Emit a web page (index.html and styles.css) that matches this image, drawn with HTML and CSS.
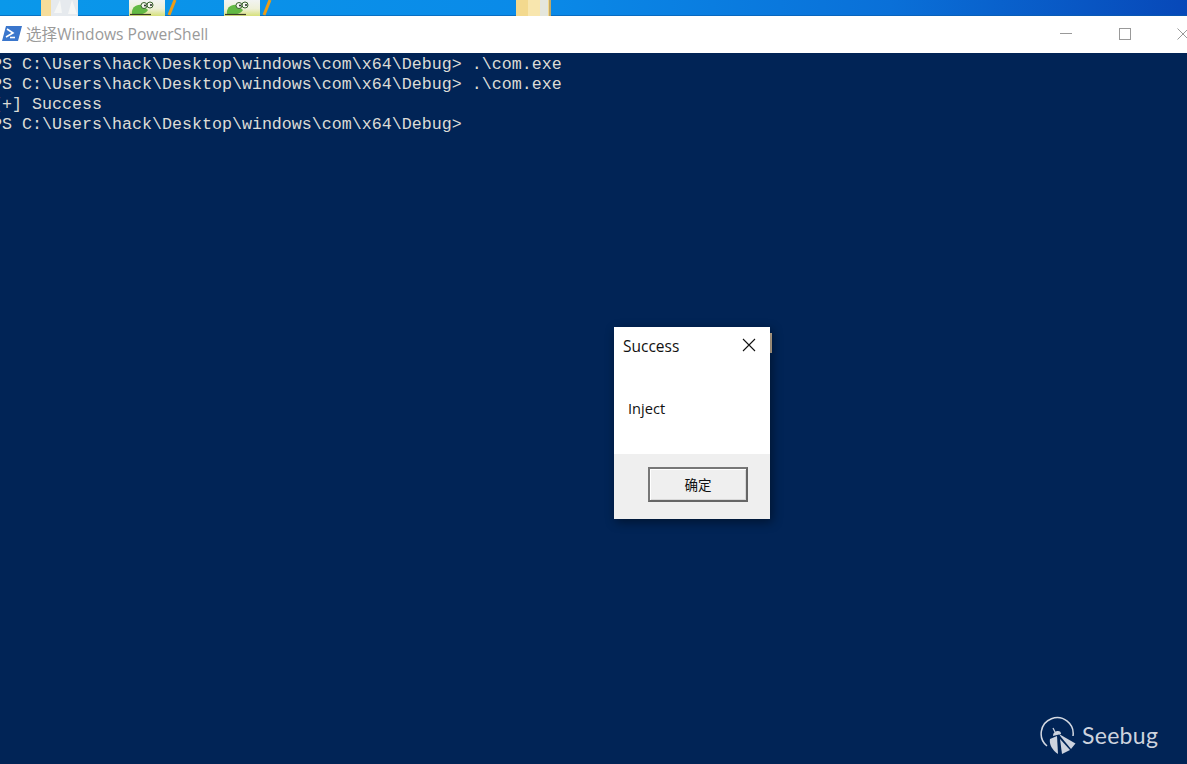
FILE: index.html
```html
<!DOCTYPE html>
<html lang="zh">
<head>
<meta charset="utf-8">
<title>Windows PowerShell</title>
<link rel="stylesheet" href="styles.css">
</head>
<body>
<div class="desktop">
  <svg class="strip" width="1187" height="16" viewBox="0 0 1187 16">
    <defs>
      <linearGradient id="sky" x1="0" x2="1" y1="0" y2="0">
        <stop offset="0" stop-color="#0a98ea"/>
        <stop offset="0.45" stop-color="#0a8ae8"/>
        <stop offset="0.75" stop-color="#0a70d8"/>
        <stop offset="1" stop-color="#0748b8"/>
      </linearGradient>
      <linearGradient id="page" x1="0" x2="0" y1="0" y2="1">
        <stop offset="0" stop-color="#f2f4f2"/>
        <stop offset=".55" stop-color="#eef0d8"/>
        <stop offset="1" stop-color="#d6e07a"/>
      </linearGradient>
      <g id="npp">
        <rect x="4" width="36" height="16" fill="url(#page)"/>
        <path d="M7 14c-1-6 4-10 10-9l6 5c-2 4-10 6-16 4z" fill="#62b944"/>
        <circle cx="19" cy="5.500" r="3" fill="#f4f7ee" stroke="#39602c"/>
        <circle cx="25" cy="5" r="3" fill="#f4f7ee" stroke="#39602c"/>
        <circle cx="20" cy="5.500" r="1" fill="#222"/>
        <circle cx="26" cy="5" r="1" fill="#222"/>
        <path d="M5 14.500h21" stroke="#3b3a24" stroke-width="1.200"/>
        <path d="M50 0l-6 15" stroke="#eb9c16" stroke-width="3"/>
      </g>
    </defs>
    <rect width="1187" height="16" fill="url(#sky)"/>
    <rect y="15" width="1187" height="1" fill="#0a5ca8" opacity=".6"/>
    <rect x="41" width="37" height="16" fill="#f6dd9a"/>
    <path d="M51 0h27v16H51z" fill="#e6eaee"/>
    <path d="M60 0l-6 13h8zM72 0l-4 14h9z" fill="#f6f7f6"/>
    <use href="#npp" x="125"/>
    <use href="#npp" x="220"/>
    <rect x="516" width="35" height="16" fill="#f3d98e"/>
    <rect x="528" width="12" height="16" fill="#f8e6ae"/>
    <rect x="540" width="8" height="16" fill="#e4e6dc"/>
    <rect x="549" width="2" height="16" fill="#c0a868"/>
  </svg>

  <div class="window">
    <header class="titlebar">
      <svg class="ps-icon" width="21" height="17" viewBox="0 0 21 17">
        <path d="M5 1h16l-4 15H1z" fill="#3a76cc"/>
        <path d="M6 4l6 4-7 4" fill="none" stroke="#fff" stroke-width="1.600"/>
        <path d="M9 12.500h5" stroke="#fff" stroke-width="1.600"/>
      </svg>
      <span class="title">选择Windows PowerShell</span>
      <div class="controls">
        <svg class="ctl ctl-min" width="12" height="12" viewBox="0 0 12 12"><path d="M0 5.500h12" stroke="#999"/></svg>
        <svg class="ctl ctl-max" width="12" height="12" viewBox="0 0 12 12"><rect x=".5" y=".5" width="11" height="11" fill="none" stroke="#999"/></svg>
        <svg class="ctl ctl-close" width="12" height="12" viewBox="0 0 12 12"><path d="M.5.5l11 11M11.500.5l-11 11" stroke="#999"/></svg>
      </div>
    </header>
    <pre class="console">PS C:\Users\hack\Desktop\windows\com\x64\Debug&gt; .\com.exe
PS C:\Users\hack\Desktop\windows\com\x64\Debug&gt; .\com.exe
[+] Success
PS C:\Users\hack\Desktop\windows\com\x64\Debug&gt;</pre>
  </div>

  <div class="sliver"></div>

  <div class="dialog">
    <div class="dialog-head">
      <span>Success</span>
      <svg class="dialog-x" width="14" height="14" viewBox="0 0 14 14"><path d="M1 1l12 12M13 1L1 13" stroke="#111" stroke-width="1.100"/></svg>
    </div>
    <div class="dialog-body">Inject</div>
    <div class="dialog-foot">
      <button class="ok" type="button">确定</button>
    </div>
  </div>

  <div class="watermark">
    <svg width="38" height="40" viewBox="0 0 38 40">
      <path d="M7 30A16 16 0 1 1 33 20" fill="none" stroke="#d4d9e2" stroke-width="1.500"/>
      <path d="M17 20L10 23C9 28 12 34 18 38z" fill="#cdd3de"/>
      <path d="M19 18L35.500 27.500L31 33L21 21z" fill="#cdd3de"/>
      <path d="M20 23L30 34L22 38z" fill="#cdd3de"/>
      <path d="M13 20c0-4 3-5 5-5s3 1 3 3z" fill="#cdd3de"/>
      <path d="M15 16l-2-4" stroke="#cdd3de" stroke-width="1.200"/>
    </svg>
    <span class="wm-text">Seebug</span>
  </div>
</div>
</body>
</html>
```

FILE: styles.css
```css
* { box-sizing: border-box; }
html, body { margin: 0; height: 100%; }
body { overflow: hidden; background: #012456; }

.desktop {
  position: relative;
  width: 1187px;
  height: 764px;
  display: flex;
  flex-direction: column;
  overflow: hidden;
}
.strip { display: block; flex: none; }

.window { flex: 1; display: flex; flex-direction: column; min-height: 0; }

.titlebar {
  flex: none;
  height: 37px;
  background: #fff;
  display: flex;
  align-items: center;
  padding-left: 1px;
}
.ps-icon { flex: none; margin-right: 4px; margin-top: -3px; }
.title {
  font-family: "Open Sans", "Noto Sans CJK SC", sans-serif;
  font-size: 15.6px;
  color: #9a9a9a;
  white-space: nowrap;
  margin-top: -2px;
}
.controls {
  margin-left: auto;
  display: flex;
  gap: 46.500px;
  margin-right: 4px;
  margin-top: -2px;
}
.ctl { display: block; flex: none; }
.ctl-close { margin-right: -6px; }

.console {
  flex: 1;
  margin: 0;
  padding: 2px 0 0;
  background: #012456;
  color: #dcdcd6;
  font-family: "Liberation Mono", monospace;
  font-size: 16.67px;
  line-height: 20px;
  transform: translateX(-8px);
}

.sliver {
  position: absolute;
  left: 770px;
  top: 333px;
  width: 2px;
  height: 20px;
  background: #cdb89c;
}

.dialog {
  position: absolute;
  left: 614px;
  top: 327px;
  width: 156px;
  height: 192px;
  background: #fff;
  display: flex;
  flex-direction: column;
  box-shadow: 2px 3px 10px rgba(0, 0, 0, .45);
  font-family: "Open Sans", sans-serif;
  color: #111;
}
.dialog-head {
  flex: none;
  height: 37px;
  padding: 0 14px 0 9px;
  display: flex;
  align-items: center;
  justify-content: space-between;
  font-size: 15.5px;
}
.dialog-x { display: block; margin-top: -2px; }
.dialog-body {
  flex: 1;
  padding: 34px 0 0 14px;
  font-size: 14.6px;
  line-height: 20px;
}
.dialog-foot {
  flex: none;
  height: 65px;
  background: #efefef;
  display: flex;
  justify-content: flex-end;
  padding: 13px 22px 0 0;
}
.ok {
  width: 100px;
  height: 35px;
  padding: 0 0 2px;
  background: #efefef;
  border: 2px solid;
  border-color: #777 #666 #666 #777;
  box-shadow: inset 1px 1px 0 #fff, inset -1px -1px 0 #d8d8d8;
  font-family: "Noto Sans CJK SC", sans-serif;
  font-size: 13.5px;
  color: #111;
}

.watermark {
  position: absolute;
  left: 1040px;
  top: 716px;
  display: flex;
  align-items: center;
  gap: 4px;
  color: #cdd3de;
}
.watermark svg { display: block; flex: none; }
.wm-text {
  font-family: "Lato", sans-serif;
  font-size: 23px;
  font-weight: 400;
  letter-spacing: .3px;
  margin-top: -2px;
}
```
